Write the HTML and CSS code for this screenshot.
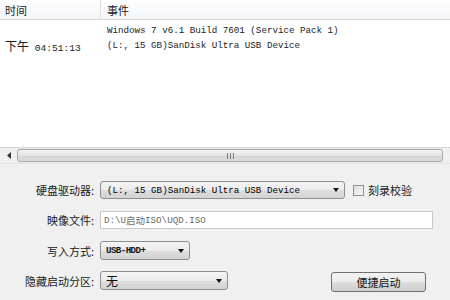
FILE: index.html
```html
<!DOCTYPE html>
<html>
<head>
<meta charset="utf-8">
<link rel="stylesheet" href="styles.css">
</head>
<body>
<div class="app">
  <div class="log">
    <div class="log-head">
      <div class="col-time">时间</div>
      <div class="col-event">事件</div>
    </div>
    <div class="log-row">
      <div class="col-time"></div>
      <div class="col-event mono">Windows 7 v6.1 Build 7601 (Service Pack 1)</div>
    </div>
    <div class="log-row">
      <div class="col-time"><span class="cjk big">下午</span><span class="mono time">&nbsp;04:51:13</span></div>
      <div class="col-event mono">(L:, 15 GB)SanDisk Ultra USB Device</div>
    </div>
  </div>
  <div class="hscroll">
    <div class="sb-btn">
      <svg width="6" height="7" viewBox="0 0 6 7"><path d="M5 0 L1 3.5 L5 7 Z" fill="#333"/></svg>
    </div>
    <div class="sb-thumb"><span class="grip"></span><span class="grip"></span><span class="grip"></span></div>
    <div class="sb-btn end"></div>
  </div>
  <div class="form">
    <div class="row">
      <div class="label">硬盘驱动器:</div>
      <div class="combo w1"><span class="mono dark">(L:, 15 GB)SanDisk Ultra USB Device</span><span class="arrow"></span></div>
      <div class="check"><span class="box"></span><span class="cjk">刻录校验</span></div>
    </div>
    <div class="row">
      <div class="label">映像文件:</div>
      <div class="input w2"><span class="mono">D:\U</span><span class="cjk small">启动</span><span class="mono">ISO\UQD.ISO</span></div>
    </div>
    <div class="row">
      <div class="label">写入方式:</div>
      <div class="combo w3"><span class="mono bold tight">USB-HDD+</span><span class="arrow"></span></div>
    </div>
    <div class="row">
      <div class="label">隐藏启动分区:</div>
      <div class="combo w4"><span class="cjk big">无</span><span class="arrow"></span></div>
      <div class="button">便捷启动</div>
    </div>
  </div>
</div>
</body>
</html>
```
FILE: styles.css
```css
* { box-sizing: border-box; }
html, body { margin: 0; padding: 0; }
body {
  width: 450px;
  height: 300px;
  overflow: hidden;
  background: #f0f0f0;
  font-family: "Noto Sans CJK SC", "Liberation Sans", sans-serif;
  font-size: 11px;
  color: #1a1a1a;
}
.app { width: 450px; height: 300px; display: flex; flex-direction: column; }
.mono { font-family: "Liberation Mono", "DejaVu Sans Mono", monospace; font-size: 9.2px; }
.mono.time { font-size: 9.6px; }
.mono.dark { color: #000; }
.bold { font-weight: bold; }
.tight { letter-spacing: -0.6px; }
.cjk { font-family: "Noto Sans CJK SC", sans-serif; font-size: 11px; }
.cjk.small { font-size: 9.5px; }
.cjk.big { font-size: 12px; }

.log { height: 148px; background: #fff; border-bottom: 1px solid #d6d6d6; }
.log-head {
  height: 20px;
  display: flex;
  align-items: center;
  background: linear-gradient(#ffffff, #f3f4f6);
  border-bottom: 1px solid #dcdcdc;
}
.log-head .col-time { border-right: 1px solid #e0e0e0; height: 20px; line-height: 20px; }
.log-head .col-event { line-height: 20px; }
.col-time { width: 101px; padding-left: 5px; }
.col-event { padding-left: 6px; }
.log-row { display: flex; align-items: center; height: 15px; }
.log-head + .log-row { margin-top: 3px; }
.log-row .mono { color: #222; }

.hscroll {
  height: 16px;
  display: flex;
  align-items: stretch;
  background: #ececec;
  border-bottom: 1px solid #e4e4e4;
}
.sb-btn {
  width: 17px;
  display: flex;
  align-items: center;
  justify-content: center;
  background: #f0f0f0;
}
.sb-btn.end { width: 7px; }
.sb-thumb {
  flex: 1;
  margin: 1px 0;
  border: 1px solid #a9a9a9;
  border-radius: 3px;
  background: linear-gradient(#f5f5f5, #e4e4e4 50%, #d4d4d4 51%, #dcdcdc);
  display: flex;
  align-items: center;
  justify-content: center;
  gap: 2px;
}
.grip { width: 1px; height: 6px; background: #7a7a7a; }

.form {
  flex: 1;
  padding-top: 17px;
  display: flex;
  flex-direction: column;
  gap: 12px;
}
.row { display: flex; align-items: center; height: 18px; }
.row:nth-child(3), .row:nth-child(4) { height: 19px; }
.row:nth-child(4) { margin-top: -1px; }
.label {
  width: 94px;
  margin-right: 6px;
  text-align: right;
  white-space: nowrap;
  color: #1a1a1a;
}
.combo {
  height: 100%;
  border: 1px solid #8e8e8e;
  border-radius: 3px;
  background: linear-gradient(#f4f4f4, #ebebeb 50%, #dddddd 51%, #d4d4d4);
  display: flex;
  align-items: center;
  padding-left: 6px;
  color: #111;
}
.combo .arrow {
  margin-left: auto;
  margin-right: 5px;
  width: 0; height: 0;
  border-left: 3.5px solid transparent;
  border-right: 3.5px solid transparent;
  border-top: 4px solid #111;
}
.w1 { width: 245px; }
.w3 { width: 90px; padding-left: 5px; }
.w4 { width: 128px; padding-left: 5px; }
.input {
  width: 333px;
  height: 100%;
  border: 1px solid #c8c8c8;
  background: #fff;
  display: flex;
  align-items: center;
  padding-left: 3px;
  color: #6a6a6a;
}
.check { display: flex; align-items: center; margin-left: 8px; gap: 4px; }
.box {
  width: 11px; height: 11px;
  border: 1px solid #8f8f8f;
  background: linear-gradient(135deg, #dedede, #f6f6f6);
}
.button {
  margin-left: 103px;
  width: 95px;
  height: 20px;
  margin-top: 3px;
  border: 1px solid #707070;
  border-radius: 3px;
  background: linear-gradient(#f2f2f2, #ebebeb 50%, #dddddd 51%, #cfcfcf);
  display: flex;
  align-items: center;
  justify-content: center;
  color: #111;
}
```
